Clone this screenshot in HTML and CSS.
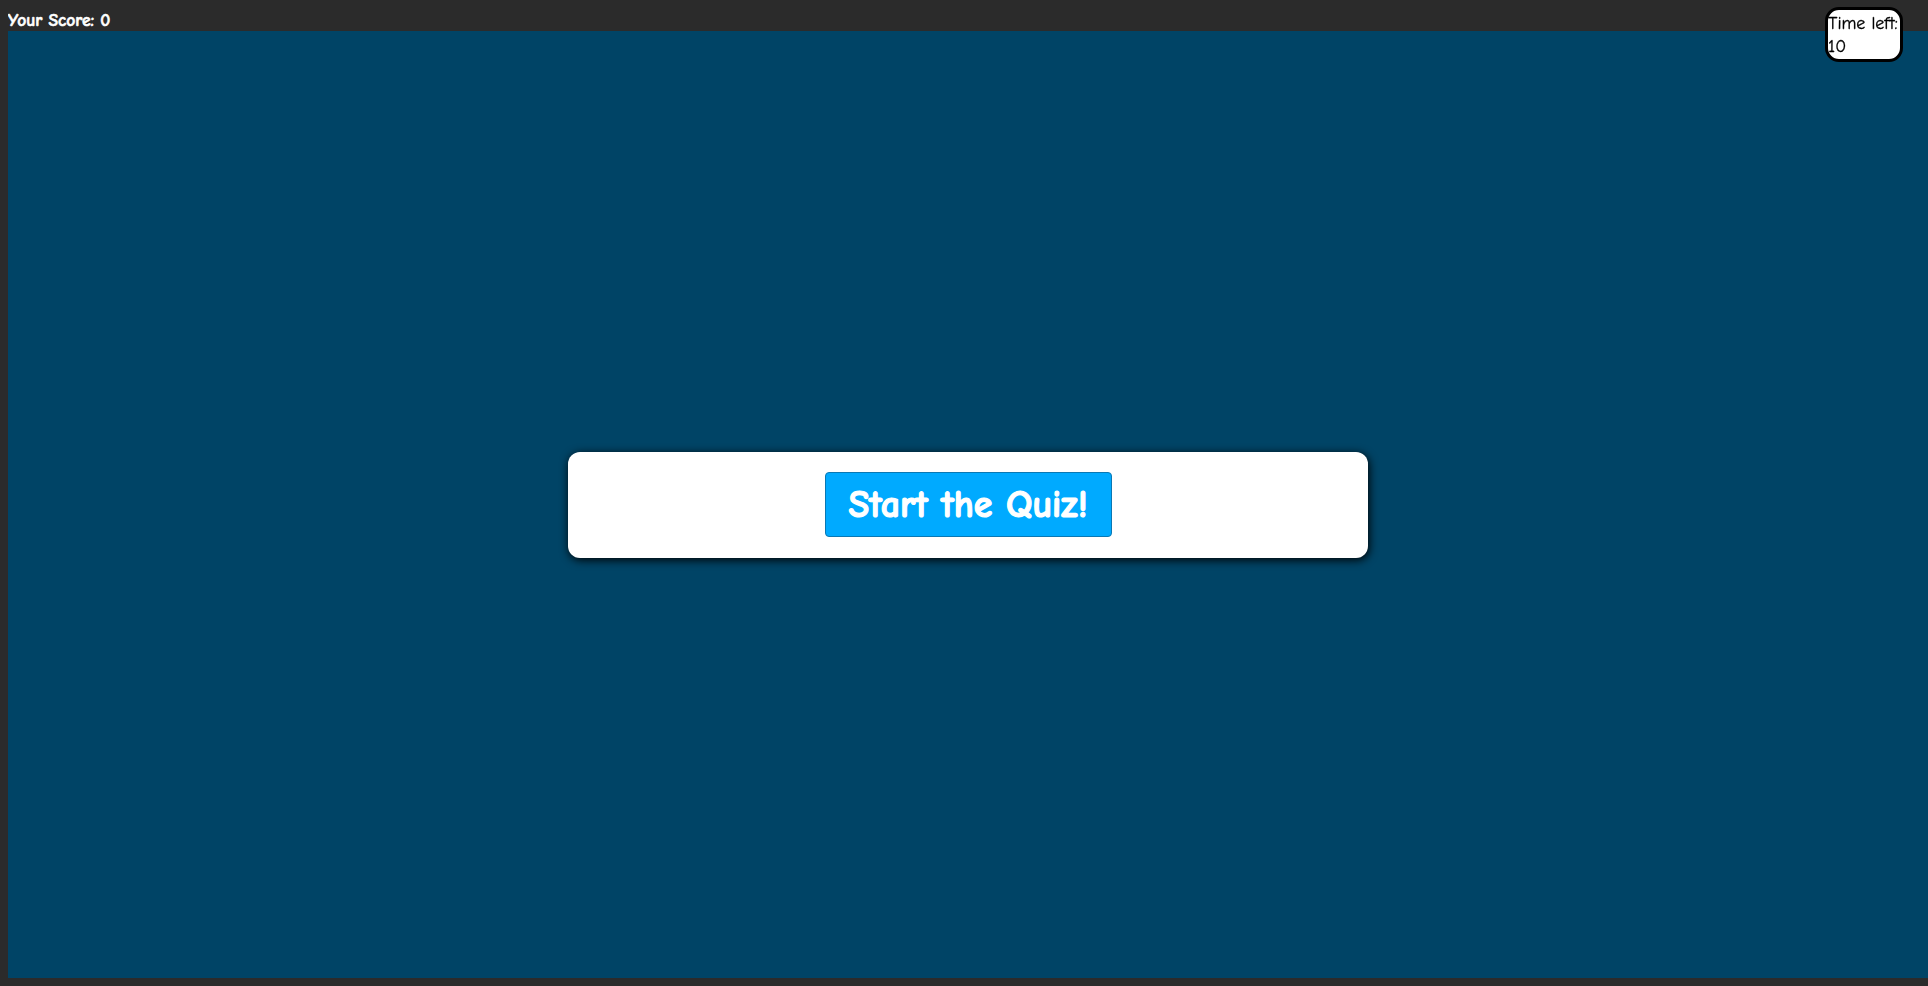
FILE: index.html
```html
<!DOCTYPE html>
<html lang="en">
<head>
<meta charset="utf-8">
<title>Quiz</title>
<link rel="stylesheet" href="styles.css">
</head>
<body>
<header class="score">Your Score: <span class="score-value">0</span></header>
<div class="timer">Time left: <span class="timer-value">10</span></div>
<main class="stage">
  <section class="card">
    <button class="start-btn" type="button">Start the Quiz!</button>
  </section>
</main>
</body>
</html>
```

FILE: styles.css
```css
html {
  overflow: hidden;
}
body {
  margin: 0;
  padding: 0 0 0 8px;
  background: #2b2b2b;
  font-family: "Comic Sans MS", "Comic Neue", "DejaVu Sans", sans-serif;
  font-synthesis: weight;
}
.score {
  height: 31px;
  box-sizing: border-box;
  padding-top: 10px;
  color: #ffffff;
  font-weight: bold;
  font-size: 17.5px;
  line-height: 20px;
  -webkit-text-stroke: 0.6px #ffffff;
  overflow: hidden;
}
.timer {
  position: fixed;
  top: 7px;
  right: 25px;
  width: 72px;
  height: 47px;
  background: #ffffff;
  border: 3px solid #000000;
  border-radius: 14px;
  color: #000000;
  font-size: 18px;
  line-height: 23px;
  padding-top: 2px;
  box-sizing: content-box;
  white-space: normal;
  -webkit-text-stroke: 0.3px #000000;
}
.stage {
  height: 947px;
  background: #004466;
  display: flex;
  align-items: center;
  justify-content: center;
}
.card {
  width: 800px;
  box-sizing: border-box;
  padding: 20px 0 21px;
  background: #ffffff;
  border-radius: 12px;
  box-shadow: 1px 2px 10px #000000;
  display: flex;
  justify-content: center;
}
.start-btn {
  width: 287px;
  height: 65px;
  box-sizing: border-box;
  background: #00aaff;
  border: 1px solid #0a78b4;
  border-radius: 4px;
  color: #ffffff;
  font-family: "Comic Sans MS", "Comic Neue", "DejaVu Sans", sans-serif;
  font-weight: bold;
  font-size: 38px;
  padding: 2px 0 0;
  cursor: pointer;
  -webkit-text-stroke: 1.2px #ffffff;
}
```
